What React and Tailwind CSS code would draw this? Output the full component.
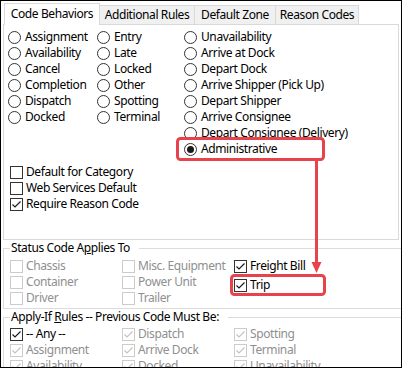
import React from 'react';

const col1 = ['Assignment', 'Availability', 'Cancel', 'Completion', 'Dispatch', 'Docked'];
const col2 = ['Entry', 'Late', 'Locked', 'Other', 'Spotting', 'Terminal'];
const col3 = [
  'Unavailability',
  'Arrive at Dock',
  'Depart Dock',
  'Arrive Shipper (Pick Up)',
  'Depart Shipper',
  'Arrive Consignee',
  'Depart Consignee (Delivery)',
  'Administrative',
];

const Radio = ({ label, selected = false }) => (
  <div className="flex items-center h-[16px] gap-[4px] whitespace-nowrap">
    <span className="w-[13px] h-[13px] shrink-0 rounded-full border border-[#333333] bg-white flex items-center justify-center">
      {selected && <span className="w-[7px] h-[7px] rounded-full bg-[#1a1a1a]" />}
    </span>
    <span>{label}</span>
  </div>
);

const Check = ({ label, checked = false, disabled = false, className = '' }) => (
  <div className={`flex items-center h-[16px] gap-[3px] whitespace-nowrap ${className}`}>
    <span
      className={`w-[13px] h-[13px] shrink-0 border bg-white flex items-center justify-center ${
        disabled ? 'border-[#cccccc]' : 'border-[#333333]'
      }`}
    >
      {checked && (
        <svg width="11" height="11" viewBox="0 0 11 11">
          <polyline
            points="1.5,5.5 4,8 9.5,2.5"
            fill="none"
            stroke={disabled ? '#c4c4c4' : '#1a1a1a'}
            strokeWidth="1.2"
          />
        </svg>
      )}
    </span>
    <span className={disabled ? 'text-[#8f8f8f]' : ''}>{label}</span>
  </div>
);

const Group = ({ title, children, className = '' }) => (
  <div className={`relative ml-[2px] border-l border-t border-b border-[#dcdcdc] ${className}`}>
    <div className="absolute -top-[9px] left-[6px] bg-white pl-px pr-[9px] leading-[16px] whitespace-nowrap">
      {title}
    </div>
    {children}
  </div>
);

export default function App() {
  return (
    <div className="relative w-[402px] h-[368px] overflow-hidden bg-white border border-black text-black text-[12px] tracking-[-0.4px] font-['Noto_Sans',sans-serif]">
      {/* tab strip */}
      <div className="flex items-end h-[23px] pl-[3px]">
        <div className="relative z-10 -mb-px h-[22px] w-[96px] bg-white border-l border-t border-r border-[#d9d9d9] flex items-center justify-center pb-[2px]">
          Code Behaviors
        </div>
        <div className="h-[19px] w-[95px] bg-[#f0f0f0] border-t border-r border-[#d9d9d9] flex items-center justify-center">
          Additional Rules
        </div>
        <div className="h-[19px] w-[81px] bg-[#f0f0f0] border-t border-r border-[#d9d9d9] flex items-center justify-center">
          Default Zone
        </div>
        <div className="h-[19px] w-[83px] bg-[#f0f0f0] border-t border-r border-[#d9d9d9] flex items-center justify-center">
          Reason Codes
        </div>
      </div>

      {/* tab page */}
      <div className="mx-[2px] h-[216px] border border-[#d9d9d9] pt-[4px] pl-[4px]">
        <div className="flex">
          <div className="w-[89px]">
            {col1.map((l) => (
              <Radio key={l} label={l} />
            ))}
          </div>
          <div className="w-[87px]">
            {col2.map((l) => (
              <Radio key={l} label={l} />
            ))}
          </div>
          <div>
            {col3.map((l) => (
              <Radio key={l} label={l} selected={l === 'Administrative'} />
            ))}
          </div>
        </div>
        <div className="mt-[7px] ml-[2px]">
          <Check label="Default for Category" />
          <Check label="Web Services Default" />
          <Check label="Require Reason Code" checked />
        </div>
      </div>

      {/* status code applies to */}
      <Group
        className="mt-[8px] pt-[9px] pb-[2px] pl-[6px]"
        title={
          <>
            Status Code A<span className="underline">p</span>plies To
          </>
        }
      >
        <div className="flex">
          <div className="w-[112px]">
            <Check label="Chassis" disabled />
            <Check label="Container" disabled />
            <Check label="Driver" disabled />
          </div>
          <div className="w-[112px]">
            <Check label="Misc. Equipment" disabled />
            <Check label="Power Unit" disabled />
            <Check label="Trailer" disabled />
          </div>
          <div>
            <Check label="Freight Bill" checked />
            <Check label="Trip" checked className="mt-[3px]" />
          </div>
        </div>
      </Group>

      {/* apply-if rules */}
      <Group
        className="mt-[8px] pt-[8px] pl-[6px] h-[80px]"
        title={
          <>
            Apply-If <span className="underline">R</span>ules -- Previous Code Must Be:
          </>
        }
      >
        <div className="flex">
          <div className="w-[112px]">
            <Check label="-- Any --" checked />
            <Check label="Assignment" checked disabled />
            <Check label="Availability" checked disabled />
          </div>
          <div className="w-[112px]">
            <Check label="Dispatch" checked disabled />
            <Check label="Arrive Dock" checked disabled />
            <Check label="Docked" checked disabled />
          </div>
          <div>
            <Check label="Spotting" checked disabled />
            <Check label="Terminal" checked disabled />
            <Check label="Unavailability" checked disabled />
          </div>
        </div>
      </Group>

      {/* callout annotation */}
      <svg
        className="absolute -left-px -top-px pointer-events-none"
        width="402"
        height="368"
        viewBox="0 0 402 368"
      >
        <rect x="177.5" y="138.5" width="146" height="21" rx="3" fill="none" stroke="#e8434c" strokeWidth="3" />
        <rect x="231.5" y="275.5" width="93" height="19" rx="3" fill="none" stroke="#e8434c" strokeWidth="3" />
        <line x1="316.5" y1="160" x2="316.5" y2="264" stroke="#e8434c" strokeWidth="3" />
        <polygon points="311.5,262 321.5,262 316.5,273" fill="#e8434c" />
      </svg>
    </div>
  );
}
